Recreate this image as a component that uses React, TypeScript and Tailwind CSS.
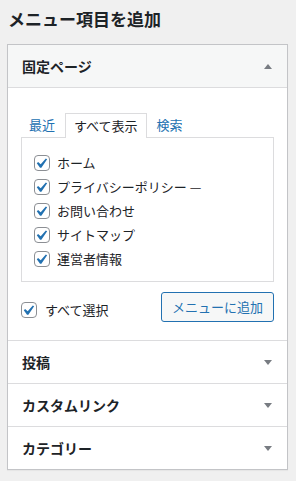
import React from "react";

const Check = ({ className = "" }: { className?: string }) => {
  return (
    <span
      className={
        "relative inline-block w-4 h-4 shrink-0 rounded-[4px] border border-[#8c8f94] bg-white " +
        className
      }
    >
      <svg
        viewBox="3 1.5 16 16"
        className="absolute -left-px -top-px w-4 h-4"
      >
        <path
          d="M14.83 4.89l1.34.94-5.81 8.38H9.02L5.78 9.67l1.34-1.25 2.57 2.4z"
          fill="#2271b1"
        />
      </svg>
    </span>
  );
};

const Arrow = ({ up }: { up?: boolean }) => {
  return (
    <svg width="8" height="5" viewBox="0 0 8 5" className="mr-[15px]">
      {up ? (
        <path d="M0 5 L4 0 L8 5 Z" fill="#787c82" />
      ) : (
        <path d="M0 0 L8 0 L4 5 Z" fill="#787c82" />
      )}
    </svg>
  );
};

export default function App() {
  const pages = [
    "ホーム",
    "プライバシーポリシー —",
    "お問い合わせ",
    "サイトマップ",
    "運営者情報",
  ];
  const closed = ["投稿", "カスタムリンク", "カテゴリー"];

  return (
    <div
      className="w-[296px] h-[481px] bg-[#f0f0f0] text-[#1d2327] overflow-hidden"
      style={{ fontFamily: '"Noto Sans CJK JP", "Noto Sans", sans-serif' }}
    >
      <h2 className="mt-2 ml-2 h-[22px] leading-[22px] text-[17px] font-bold">
        メニュー項目を追加
      </h2>

      <div className="mt-[14px] ml-[7px] w-[281px] border border-[#c3c4c7] bg-white shadow-[0_1px_1px_rgba(0,0,0,0.04)]">
        {/* open section */}
        <div className="h-[43px] flex items-center justify-between bg-[#f6f7f7] border-b border-[#dcdcde] pl-[14px]">
          <span className="text-[14px] font-bold">固定ページ</span>
          <Arrow up />
        </div>
        <div className="pt-[25px] pb-[18px] pl-[13px] pr-[13px] border-b border-[#dcdcde]">
          <div className="flex h-6 items-stretch text-[13px]">
            <span className="px-2 mr-[2px] flex items-center text-[#2271b1]">最近</span>
            <span className="px-2 mr-[2px] flex items-center border border-b-0 border-[#dcdcde] bg-white -mb-px relative">
              すべて表示
            </span>
            <span className="px-2 flex items-center text-[#2271b1]">検索</span>
          </div>
          <div className="border border-[#dcdcde] pt-[13px] pb-[10px] pl-3">
            {pages.map((p, i) => (
              <div key={i} className="h-6 flex items-center text-[13px]">
                <Check />
                <span className="ml-[7px]">{p}</span>
              </div>
            ))}
          </div>
          <div className="mt-[10px] flex items-center justify-between">
            <div className="flex items-center text-[13px] mt-[6px]">
              <Check />
              <span className="ml-2">すべて選択</span>
            </div>
            <button className="h-[30px] px-[10px] rounded-[3px] border border-[#2271b1] bg-[#f6f7f7] text-[#2271b1] text-[13px]">
              メニューに追加
            </button>
          </div>
        </div>

        {closed.map((c, i) => (
          <div
            key={i}
            className={
              "flex items-center justify-between pl-[14px] " +
              (i < closed.length - 1 ? "border-b border-[#dcdcde] h-[43px]" : "h-[42px]")
            }
          >
            <span className="text-[14px] font-bold">{c}</span>
            <Arrow />
          </div>
        ))}
      </div>
    </div>
  );
}
